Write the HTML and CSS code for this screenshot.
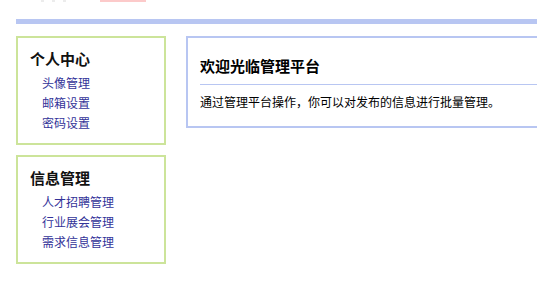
FILE: index.html
```html
<!DOCTYPE html>
<html lang="zh-CN">
<head>
<meta charset="utf-8">
<title>管理平台</title>
<link rel="stylesheet" href="styles.css">
</head>
<body>
<div class="header">
  <div class="logo-rest">
    <span class="speck gray"></span>
    <span class="speck gray"></span>
    <span class="speck gray"></span>
    <span class="speck red"></span>
  </div>
</div>
<div class="topbar"></div>
<div class="main">
  <div class="sidebar">
    <div class="box">
      <h3 class="box-title">个人中心</h3>
      <ul class="links">
        <li><a href="#">头像管理</a></li>
        <li><a href="#">邮箱设置</a></li>
        <li><a href="#">密码设置</a></li>
      </ul>
    </div>
    <div class="box">
      <h3 class="box-title">信息管理</h3>
      <ul class="links">
        <li><a href="#">人才招聘管理</a></li>
        <li><a href="#">行业展会管理</a></li>
        <li><a href="#">需求信息管理</a></li>
      </ul>
    </div>
  </div>
  <div class="content">
    <h2 class="content-title">欢迎光临管理平台</h2>
    <p class="content-text">通过管理平台操作，你可以对发布的信息进行批量管理。</p>
  </div>
</div>
</body>
</html>
```

FILE: styles.css
```css
html, body {
  margin: 0;
  padding: 0;
  overflow: hidden;
  background: #ffffff;
}
body {
  font-family: "Noto Sans CJK SC", "Noto Sans", sans-serif;
  font-size: 12px;
  color: #000000;
}
.header {
  height: 19px;
}
.logo-rest {
  display: flex;
  align-items: flex-start;
  padding-left: 41px;
  gap: 8px;
}
.speck {
  display: block;
  height: 2px;
}
.speck.gray {
  width: 3px;
  background: #ececec;
}
.speck.red {
  width: 46px;
  margin-left: 26px;
  background: #fccaca;
}
.topbar {
  margin-left: 16px;
  height: 5px;
  background: #b8c6f2;
}
.main {
  display: flex;
  align-items: flex-start;
  gap: 20px;
  padding-left: 16px;
  margin-top: 12px;
}
.sidebar {
  display: flex;
  flex-direction: column;
  gap: 10px;
  width: 150px;
  flex: 0 0 150px;
}
.box {
  border: 2px solid #cce49a;
  padding: 11px 12px 10px;
}
.box-title {
  margin: 0;
  font-size: 15px;
  line-height: 20px;
  font-weight: bold;
  color: #111111;
}
.links {
  list-style: none;
  margin: 4px 0 0;
  padding: 0 0 0 12px;
}
.links li {
  line-height: 20px;
  height: 20px;
}
.links a {
  color: #333399;
  text-decoration: none;
  font-size: 12px;
}
.content {
  flex: 1 1 auto;
  min-width: 0;
  border: 2px solid #b8c6f2;
  border-right: none;
  padding: 18px 0 14px 12px;
}
.content-title {
  margin: 0;
  font-size: 15px;
  line-height: 20px;
  font-weight: bold;
  padding-bottom: 8px;
  border-bottom: 1px solid #b8c6f2;
}
.content-text {
  margin: 7px 0 0;
  line-height: 20px;
  font-size: 12px;
  white-space: nowrap;
}
```
